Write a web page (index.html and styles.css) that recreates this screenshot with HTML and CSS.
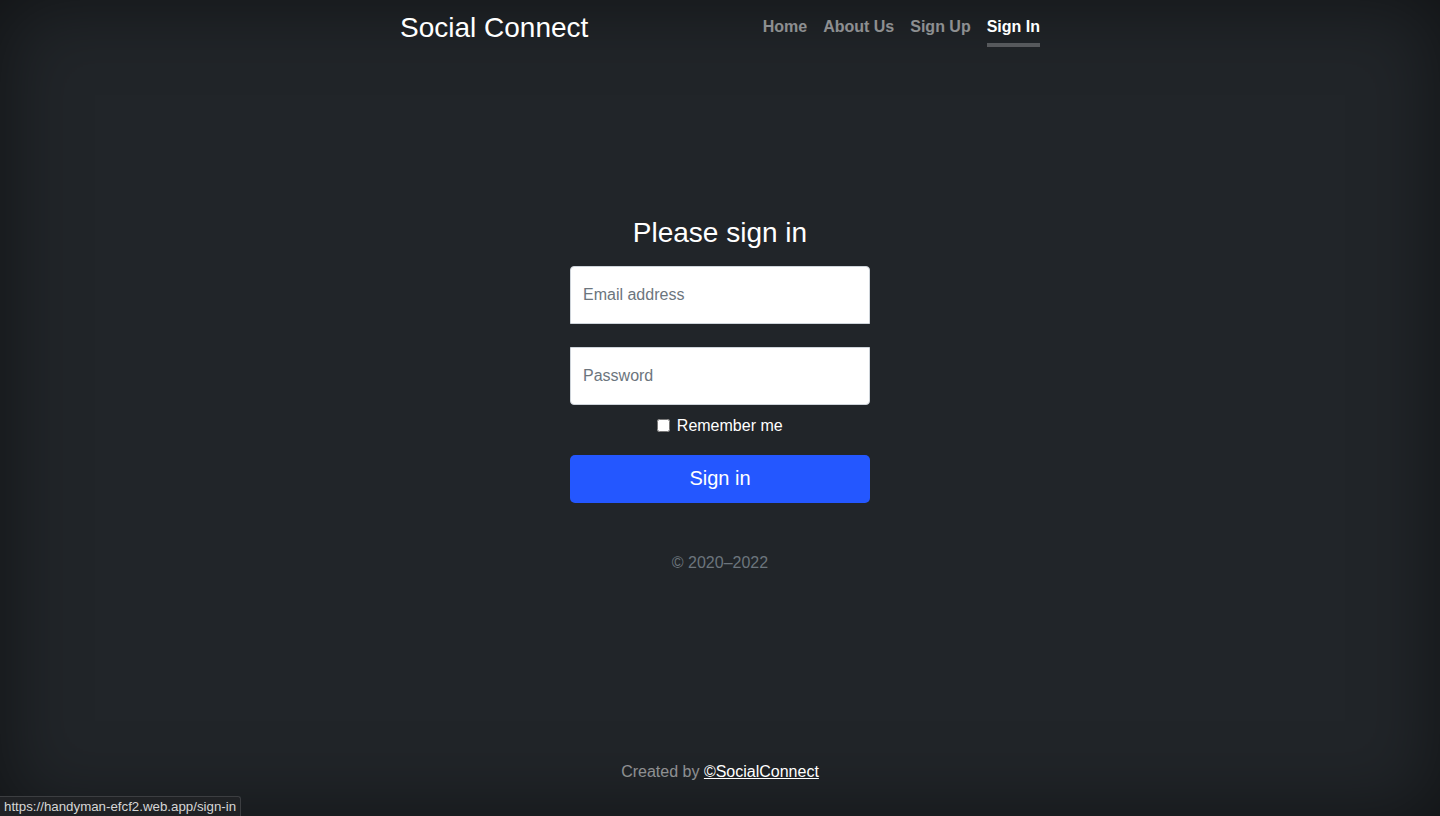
FILE: index.html
```html
<!DOCTYPE html>
<html lang="en">
<head>
<meta charset="utf-8">
<title>Social Connect - Sign In</title>
<link rel="stylesheet" href="styles.css">
</head>
<body>
<div class="cover">
  <header class="masthead">
    <h3 class="brand">Social Connect</h3>
    <nav class="nav">
      <a class="nav-link" href="#">Home</a>
      <a class="nav-link" href="#">About Us</a>
      <a class="nav-link" href="#">Sign Up</a>
      <a class="nav-link active" href="#">Sign In</a>
    </nav>
  </header>

  <main class="main">
    <form class="form-signin">
      <h1 class="title">Please sign in</h1>
      <input class="field field-top" type="email" placeholder="Email address">
      <input class="field field-bottom" type="password" placeholder="Password">
      <div class="remember">
        <label><input type="checkbox" class="check"> Remember me</label>
      </div>
      <button class="btn" type="button">Sign in</button>
      <p class="copy">© 2020–2022</p>
    </form>
  </main>

  <footer class="foot">
    <p>Created by <a href="#" class="foot-link">©SocialConnect</a></p>
  </footer>
</div>
<div class="status">https://handyman-efcf2.web.app/sign-in</div>
</body>
</html>
```

FILE: styles.css
```css
* { box-sizing: border-box; }
html, body { height: 100%; }
body {
  margin: 0;
  background-color: #212529;
  color: #fff;
  font-family: "Liberation Sans", Arial, sans-serif;
  font-size: 16px;
  line-height: 1.5;
  box-shadow: inset 0 0 5rem rgba(0, 0, 0, .5);
  text-align: center;
}
.cover {
  max-width: 672px;
  height: 100%;
  margin: 0 auto;
  padding: 11px 16px 16px;
  display: flex;
  flex-direction: column;
}
.masthead {
  display: flex;
  justify-content: space-between;
  align-items: flex-start;
}
.brand {
  margin: 0;
  font-size: 28px;
  font-weight: 400;
  line-height: 1.2;
}
.nav { display: flex; }
.nav-link {
  margin-left: 16px;
  padding: 4px 0 4px;
  color: rgba(255, 255, 255, .5);
  font-weight: 700;
  text-decoration: none;
  border-bottom: 4px solid transparent;
  line-height: 24px;
}
.nav-link.active {
  color: #fff;
  border-bottom-color: rgba(255, 255, 255, .25);
}
.main {
  flex: 1;
  display: flex;
  align-items: center;
  justify-content: center;
  padding: 0 16px;
}
.form-signin {
  width: 100%;
  max-width: 330px;
  padding: 15px;
  display: flex;
  flex-direction: column;
}
.title {
  margin: 0 0 16px;
  font-size: 28px;
  font-weight: 400;
  line-height: 1.2;
}
.field {
  display: block;
  width: 100%;
  height: 58px;
  padding: 16px 12px;
  font-family: inherit;
  font-size: 16px;
  color: #212529;
  background: #fff;
  border: 1px solid #ced4da;
  border-radius: 4px;
  outline: none;
}
.field::placeholder { color: #6c757d; }
.field-top { border-bottom-left-radius: 0; border-bottom-right-radius: 0; margin-bottom: 23px; }
.field-bottom { border-top-left-radius: 0; border-top-right-radius: 0; }
.remember {
  margin: 9px 0 17px;
  line-height: 24px;
}
.check {
  width: 13px;
  height: 13px;
  margin: 0 2px 0 0;
  vertical-align: -1px;
}
.btn {
  height: 48px;
  width: 100%;
  border: 0;
  border-radius: 5px;
  background: #2457ff;
  color: #fff;
  font-family: inherit;
  font-size: 20px;
}
.copy {
  margin: 48px 0 16px;
  color: #6c757d;
}
.foot {
  color: rgba(255, 255, 255, .5);
}
.foot p { margin: 0 0 16px; }
.foot-link { color: #fff; }
.status {
  position: fixed;
  left: 0;
  bottom: 0;
  height: 20px;
  padding: 0 4px;
  background: #202225;
  border: 1px solid #3c3e41;
  border-left: 0;
  border-bottom: 0;
  border-top-right-radius: 3px;
  color: #d6d6d6;
  font-size: 13.3px;
  line-height: 19px;
  text-align: left;
  white-space: nowrap;
}
```
